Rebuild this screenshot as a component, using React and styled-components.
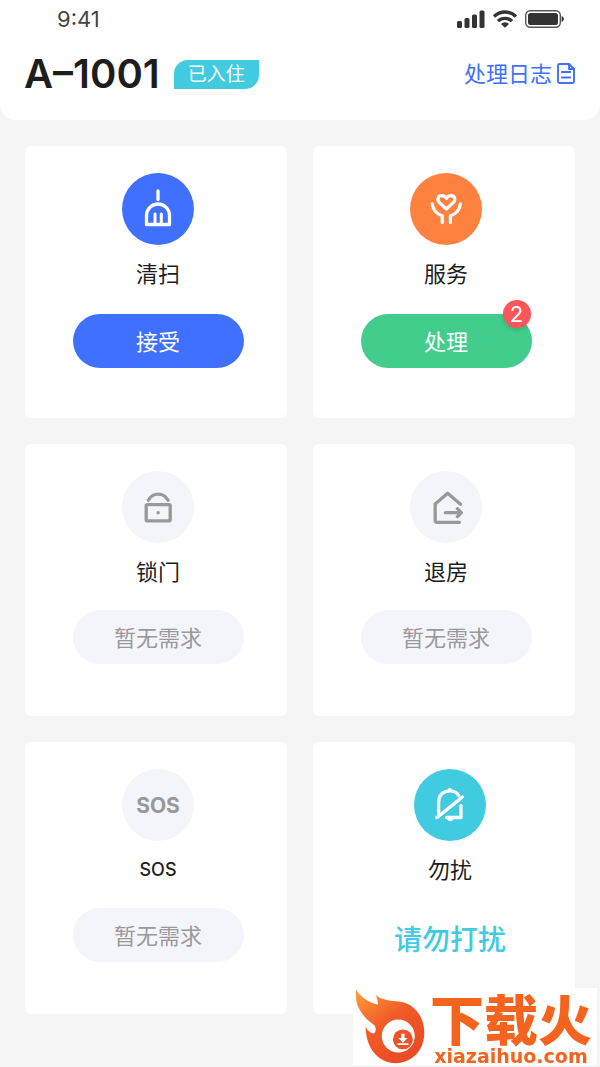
import React from "react";
import styled, { createGlobalStyle, css } from "styled-components";

const GlobalStyle = createGlobalStyle`
  * {
    box-sizing: border-box;
  }
  body {
    margin: 0;
    background: #f5f5f5;
    color: #1d1d1d;
    font-family: Inter, "Noto Sans CJK SC", sans-serif;
  }
  button {
    font-family: inherit;
  }
`;

const blue = "#4070ff";
const orange = "#ff8140";
const green = "#42cd8c";
const cyan = "#41cbe0";
const pale = "#f4f5fa";
const grey = "#999999";

const SignalIcon = () => (
  <svg width="28" height="18" viewBox="0 0 28 18" fill="#333">
    <rect x="0" y="11" width="5" height="7" rx="1.5" />
    <rect x="7.5" y="8" width="5" height="10" rx="1.5" />
    <rect x="15" y="4.5" width="5" height="13.5" rx="1.5" />
    <rect x="22.5" y="0.5" width="5" height="17.5" rx="1.5" />
  </svg>
);

const WifiIcon = () => (
  <svg width="24" height="18" viewBox="0 0 24 18" fill="none" stroke="#333">
    <path d="M1 6.6a15.6 15.6 0 0 1 22 0" strokeWidth="3.4" />
    <path d="M5 11.2a10 10 0 0 1 14 0" strokeWidth="3.2" />
    <path d="M12 17.8 8 14a5.6 5.6 0 0 1 8 0z" fill="#333" stroke="none" />
  </svg>
);

const BatteryIcon = () => (
  <svg width="39" height="18" viewBox="0 0 39 18" fill="#333">
    <rect
      x="0.7"
      y="0.7"
      width="34.6"
      height="16.6"
      rx="4.5"
      fill="none"
      stroke="#555"
      strokeWidth="1.4"
    />
    <rect x="3" y="3" width="30" height="12" rx="2.5" />
    <path d="M36.6 6c3 1 3 5 0 6z" />
  </svg>
);

const LogIcon = () => (
  <svg
    width="20"
    height="22"
    viewBox="-1 0 20 22"
    fill="none"
    stroke={blue}
    strokeWidth="1.9"
    strokeLinejoin="round"
    strokeLinecap="round"
  >
    <path d="M12 1H2.5A1.5 1.5 0 0 0 1 2.5v16A1.5 1.5 0 0 0 2.500 20h13a1.5 1.5 0 0 0 1.5-1.5V6z" />
    <path d="M12 1v5h5M4.800 9h8.400M4.800 14.500h8.400" />
  </svg>
);

const Glyph = ({ children, color = "#fff" }) => (
  <svg
    width="72"
    height="72"
    viewBox="0 0 72 72"
    fill="none"
    stroke={color}
    strokeWidth="3.3"
    strokeLinecap="round"
    strokeLinejoin="round"
  >
    {children}
  </svg>
);

const BroomIcon = () => (
  <Glyph>
    <path d="M36 18v8.5M24.5 51.5v-9a11.5 11.5 0 0 1 23 0v9z" />
    <path d="M33 41v9.5M39.3 41v9.5" strokeWidth="3" />
  </Glyph>
);

const CareIcon = () => (
  <Glyph>
    <path d="M36.3 36 29.4 29.6C26.5 26.6 28 22.7 31.6 22.7c2 0 3.6 1 4.7 2.6 1.100-1.600 2.700-2.600 4.700-2.600 3.600 0 5.100 3.900 2.200 6.900z" />
    <path d="M22.3 31C22.7 36.5 25.5 40.5 32.2 42.8v6.7M50.3 31C49.900 36.500 47.100 40.500 40.400 42.800v6.700" />
  </Glyph>
);

const LockIcon = () => (
  <Glyph color={grey}>
    <rect x="24.2" y="33.6" width="24" height="16.2" rx="1" />
    <path d="M26.3 29.2C31 21 41.4 21 46.1 29.2" />
    <circle cx="36.1" cy="41.7" r="1.7" fill={grey} stroke="none" />
  </Glyph>
);

const LeaveIcon = () => (
  <Glyph color={grey}>
    <path d="M50.5 33.200 37.700 22.300 25.200 33v16.500a1.800 1.800 0 0 0 1.800 1.800h22.500" />
    <path d="M35.300 41.700h15.500M47.400 37.700l4 4-4 4" />
  </Glyph>
);

const MuteIcon = () => (
  <Glyph>
    <path d="M22.8 48.600 48.500 28" />
    <path d="M24.600 46V33.500C24.600 26 29 21.800 35.700 21.800c4 0 7.300 1.700 9.300 5" />
    <path d="M35.700 20.500v1M47 36.500v12H32.500" />
    <path d="M33 49h6.300c-.3 3.700-6 3.700-6.300 0z" fill="#fff" strokeWidth="1" />
  </Glyph>
);

const FlameLogo = () => (
  <svg width="70" height="75" viewBox="45 56 212 226">
    <defs>
      <linearGradient id="flame" x1="0" y1="0" x2="0.7" y2="1">
        <stop offset="0" stopColor="#fda03a" />
        <stop offset="0.5" stopColor="#f15a29" />
        <stop offset="1" stopColor="#ea4a25" />
      </linearGradient>
    </defs>
    <path
      fill="url(#flame)"
      fillRule="evenodd"
      d="M49 58C62 82 88 96 114 103C115 92 112 82 107 72C124 90 150 90 182 94C226 101 255 140 255 187C255 240 218 280 168 280C120 280 78 240 77 169C83 181 90 189 101 190C110 186 109 173 104 165C84 151 70 139 58 116C48 98 46 77 49 58ZM176 148A50 50 0 1 0 176 248A50 50 0 1 0 176 148Z"
    />
    <circle cx="190" cy="208" r="30" fill="#ed5228" />
    <path d="M185 191h10v13h9l-14 14-14-14h9zM174 220h33v5h-33z" fill="#fff" />
  </svg>
);

const services = [
  {
    title: "清扫",
    icon: <BroomIcon />,
    circle: blue,
    action: "接受",
    fill: blue,
  },
  {
    title: "服务",
    icon: <CareIcon />,
    circle: orange,
    action: "处理",
    fill: green,
    count: 2,
  },
  { title: "锁门", icon: <LockIcon /> },
  { title: "退房", icon: <LeaveIcon /> },
  { title: "SOS", icon: "SOS", latin: true },
  { title: "勿扰", icon: <MuteIcon />, circle: cyan, notice: "请勿打扰" },
];

const App = () => (
  <>
    <GlobalStyle />
    <Header>
      <StatusBar>
        <Time>9:41</Time>
        <StatusIcons>
          <SignalIcon />
          <WifiIcon />
          <BatteryIcon />
        </StatusIcons>
      </StatusBar>
      <TitleBar>
        <RoomNumber>A–1001</RoomNumber>
        <Tag>已入住</Tag>
        <LogLink href="#log">
          处理日志
          <LogIcon />
        </LogLink>
      </TitleBar>
    </Header>
    <Grid>
      {services.map(({ title, icon, circle, latin, notice, action, fill, count }) => (
        <Card key={title} $notice={notice}>
          <Circle $color={circle}>{icon}</Circle>
          <CardTitle $latin={latin} $active={action}>
            {title}
          </CardTitle>
          {notice ? (
            <Notice>{notice}</Notice>
          ) : (
            <Action $fill={fill} disabled={!action}>
              {action || "暂无需求"}
              {count && <Badge>{count}</Badge>}
            </Action>
          )}
        </Card>
      ))}
    </Grid>
    <Watermark>
      <FlameLogo />
      <Brand>
        <BrandName>下载火</BrandName>
        <BrandSite>xiazaihuo.com</BrandSite>
      </Brand>
    </Watermark>
  </>
);

const Header = styled.header`
  background: white;
  border-radius: 0 0 16px 16px;
`;
const StatusBar = styled.div`
  display: flex;
  align-items: center;
  justify-content: space-between;
  height: 37px;
  padding: 0 36px 0 57px;
`;
const Time = styled.span`
  font-size: 22px;
  color: #444;
`;
const StatusIcons = styled.div`
  display: flex;
  gap: 8px;
`;
const TitleBar = styled.div`
  display: flex;
  align-items: center;
  padding: 13px 24px 22px;
`;
const RoomNumber = styled.h1`
  margin: 0;
  font-size: 40px;
  font-weight: 600;
  line-height: 48px;
`;
const Tag = styled.span`
  margin-left: 14px;
  padding: 0 14px;
  border-radius: 14px 0;
  background: ${cyan};
  color: white;
  font-size: 19px;
  line-height: 29px;
`;
const LogLink = styled.a`
  display: flex;
  align-items: center;
  gap: 4px;
  margin-left: auto;
  color: ${blue};
  font-size: 22px;
  line-height: 32px;
  text-decoration: none;
`;
const Grid = styled.main`
  display: grid;
  grid-template-columns: 1fr 1fr;
  gap: 26px;
  padding: 26px 25px 53px;
`;
const Card = styled.section`
  display: flex;
  flex-direction: column;
  align-items: center;
  min-height: 272px;
  padding: 27px 0 24px ${({ $notice }) => ($notice ? "12px" : "4px")};
  border-radius: 6px;
  background: white;
`;
const Circle = styled.div`
  display: flex;
  align-items: center;
  justify-content: center;
  width: 72px;
  height: 72px;
  border-radius: 50%;
  background: ${({ $color }) => $color || pale};
  color: ${grey};
  font-size: 21px;
  font-weight: 700;
`;
const CardTitle = styled.h2`
  margin: 13px 0 ${({ $active }) => ($active ? "24px" : "22px")};
  font-size: ${({ $latin }) => ($latin ? "18px" : "22px")};
  font-weight: ${({ $latin }) => ($latin ? 500 : 400)};
  line-height: 32px;
`;
const Action = styled.button`
  position: relative;
  width: 171px;
  height: 54px;
  padding: 0 0 3px;
  border: none;
  border-radius: 27px;
  background: ${({ $fill }) => $fill || pale};
  color: white;
  font-size: 22px;
  cursor: pointer;

  ${({ disabled }) =>
    disabled &&
    css`
      color: ${grey};
      cursor: default;
    `}
`;
const Badge = styled.span`
  position: absolute;
  top: -14px;
  right: 1px;
  width: 28px;
  height: 28px;
  border-radius: 50%;
  background: #fc5659;
  box-shadow: 0 2px 4px rgba(0, 0, 0, 0.15);
  line-height: 28px;
`;
const Notice = styled.p`
  margin: 0;
  color: ${cyan};
  font-size: 28px;
  font-weight: 500;
  line-height: 64px;
`;
const Watermark = styled.aside`
  position: fixed;
  right: 3px;
  bottom: 2px;
  display: flex;
  align-items: flex-start;
  width: 244px;
  height: 77px;
  padding: 1px 0 0 2px;
  background: white;
  color: #f4641e;
`;
const Brand = styled.div`
  display: flex;
  flex-direction: column;
  align-items: center;
  margin: 0 auto;
  white-space: nowrap;
`;
const BrandName = styled.span`
  font-family: "Noto Sans CJK SC", sans-serif;
  font-size: 54px;
  font-weight: 900;
  line-height: 58px;
`;
const BrandSite = styled.span`
  font-family: "DejaVu Sans", sans-serif;
  font-size: 19px;
  font-weight: 700;
  line-height: 18px;
`;

export default App;
